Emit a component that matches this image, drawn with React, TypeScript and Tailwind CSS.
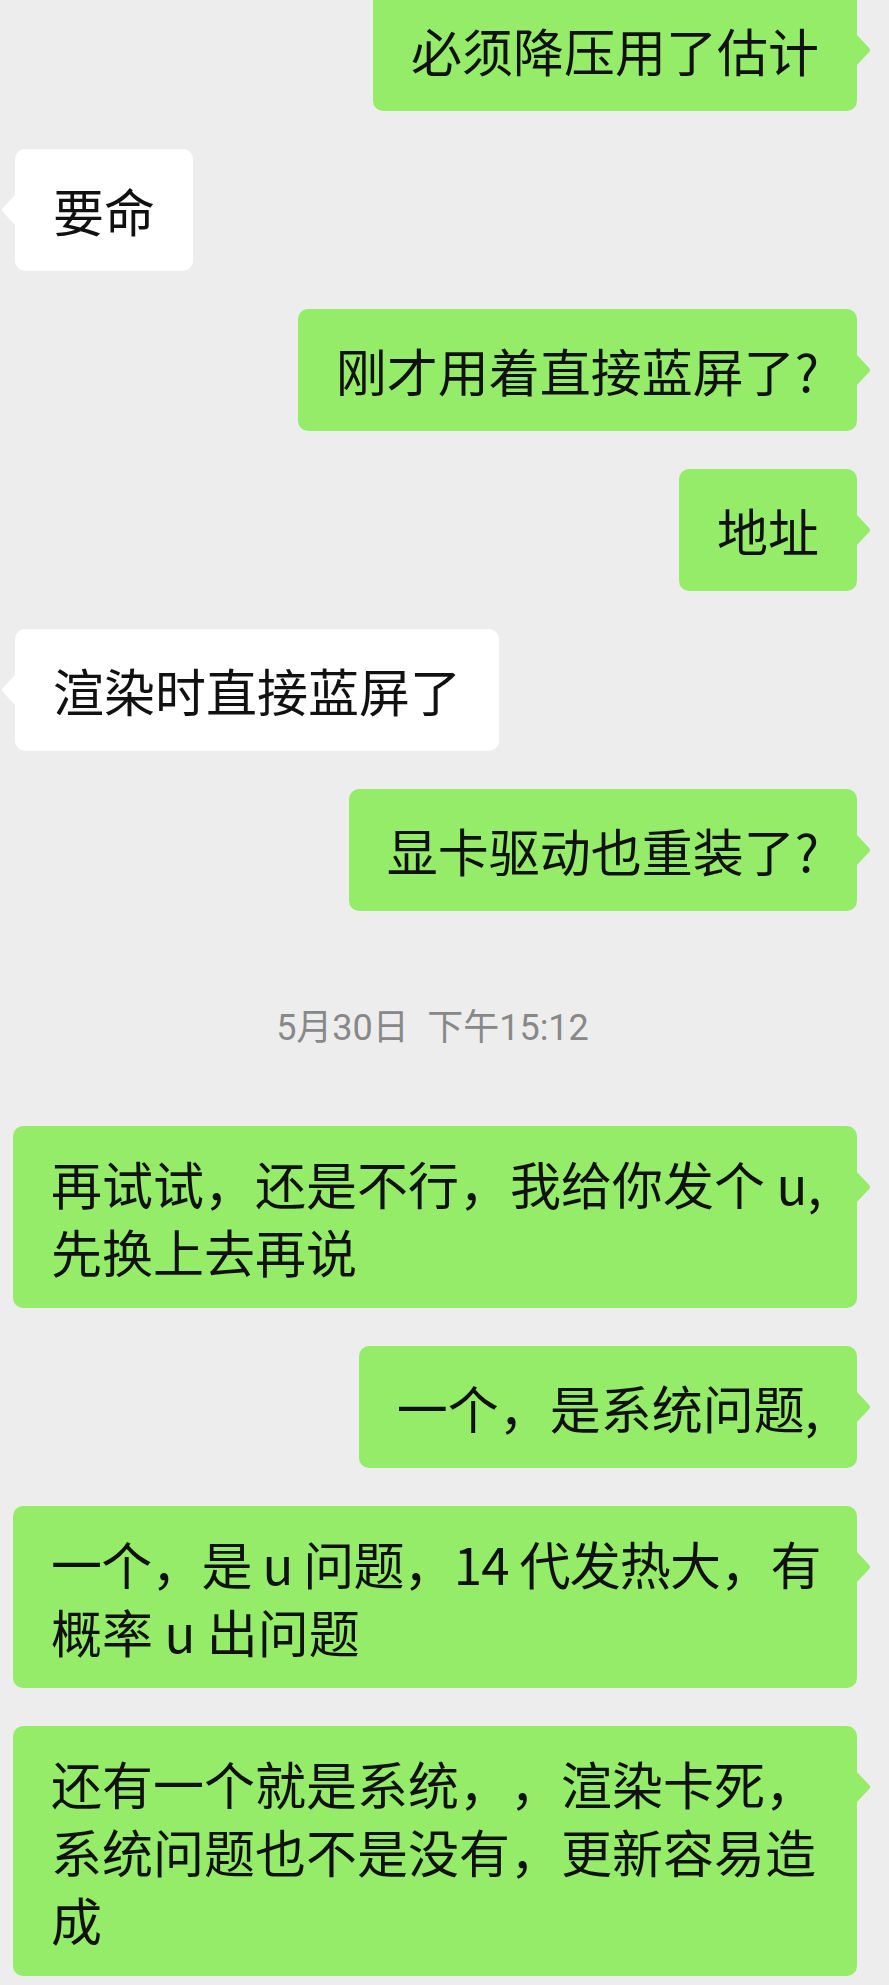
import clsx from "clsx";

type Msg =
  | {
      kind: "bubble";
      side: "left" | "right";
      lines: string[];
      full?: boolean;
      tightLine?: number;
    }
  | { kind: "time"; text: string };

const messages: Msg[] = [
  { kind: "bubble", side: "right", lines: ["必须降压用了估计"] },
  { kind: "bubble", side: "left", lines: ["要命"] },
  { kind: "bubble", side: "right", lines: ["刚才用着直接蓝屏了?"] },
  { kind: "bubble", side: "right", lines: ["地址"] },
  { kind: "bubble", side: "left", lines: ["渲染时直接蓝屏了"] },
  { kind: "bubble", side: "right", lines: ["显卡驱动也重装了?"] },
  { kind: "time", text: "5月30日\u2002下午15:12" },
  {
    kind: "bubble",
    side: "right",
    full: true,
    lines: ["再试试，还是不行，我给你发个 u,", "先换上去再说"],
  },
  { kind: "bubble", side: "right", lines: ["一个，是系统问题,"] },
  {
    kind: "bubble",
    side: "right",
    full: true,
    tightLine: 0,
    lines: ["一个，是 u 问题，14 代发热大，有", "概率 u 出问题"],
  },
  {
    kind: "bubble",
    side: "right",
    full: true,
    lines: ["还有一个就是系统，，渲染卡死，", "系统问题也不是没有，更新容易造", "成"],
  },
];

const Tail = ({ side }: { side: "left" | "right" }) =>
  side === "right" ? (
    <svg
      className="absolute left-full top-[46px]"
      width="14"
      height="30"
      viewBox="0 0 14 30"
    >
      <path d="M0 0 L12.4 13.3 Q14 15 12.4 16.7 L0 30 Z" fill="#95ec69" />
    </svg>
  ) : (
    <svg
      className="absolute right-full top-[46px]"
      width="14"
      height="30"
      viewBox="0 0 14 30"
    >
      <path d="M14 0 L1.6 13.3 Q0 15 1.6 16.7 L14 30 Z" fill="#ffffff" />
    </svg>
  );

const Bubble = ({
  side,
  lines,
  full,
  tightLine,
}: {
  side: "left" | "right";
  lines: string[];
  full?: boolean;
  tightLine?: number;
}) => (
  <div className={clsx("flex", side === "right" ? "justify-end" : "justify-start")}>
    <div
      className={clsx(
        "relative flex min-h-[122px] items-center rounded-[10px] px-[38px] py-[23px]",
        side === "right" ? "bg-[#95ec69]" : "ml-[2px] bg-white",
        full && "w-full"
      )}
    >
      <div className="font-['Noto_Sans_CJK_SC',sans-serif] text-[51px] leading-[68px] text-[#111] [text-spacing-trim:space-all]">
        {lines.map((line, i) => (
          <div
            key={i}
            className={clsx("whitespace-pre", i === tightLine && "tracking-[-0.8px]")}
          >
            {line}
          </div>
        ))}
      </div>
      <Tail side={side} />
    </div>
  </div>
);

export default function App() {
  return (
    <div className="min-h-screen overflow-hidden bg-[#ededed] font-['Roboto','Noto_Sans_CJK_SC',sans-serif]">
      <div className="-mt-[11px] flex flex-col gap-[38px] pl-[13px] pr-[32px]">
        {messages.map((m, i) =>
          m.kind === "time" ? (
            <div
              key={i}
              className="flex justify-center pb-[37px] pr-[5px] pt-[56px] text-[36px] leading-[46px] text-[#888]"
            >
              {m.text}
            </div>
          ) : (
            <Bubble
              key={i}
              side={m.side}
              lines={m.lines}
              full={m.full}
              tightLine={m.tightLine}
            />
          )
        )}
      </div>
    </div>
  );
}
